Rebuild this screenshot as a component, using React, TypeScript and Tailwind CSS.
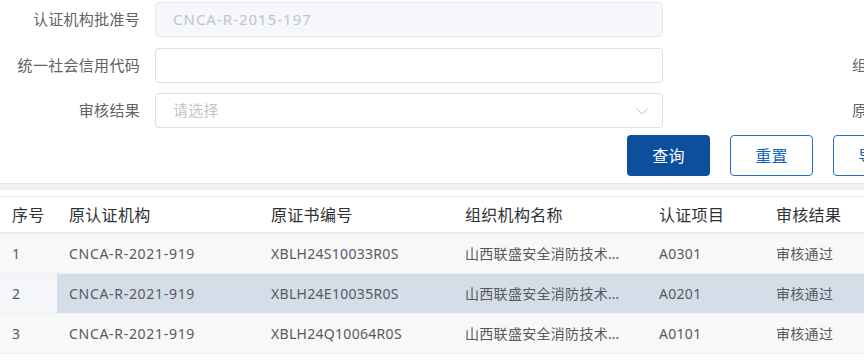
const ROWS = [
  { no: "1", org: "CNCA-R-2021-919", cert: "XBLH24S10033R0S", name: "山西联盛安全消防技术有限公司", item: "A0301", result: "审核通过" },
  { no: "2", org: "CNCA-R-2021-919", cert: "XBLH24E10035R0S", name: "山西联盛安全消防技术有限公司", item: "A0201", result: "审核通过" },
  { no: "3", org: "CNCA-R-2021-919", cert: "XBLH24Q10064R0S", name: "山西联盛安全消防技术有限公司", item: "A0101", result: "审核通过" },
];

const font = "font-['Noto_Sans','Noto_Sans_CJK_SC',sans-serif] tracking-[0.3px]";

function FormRow({ label, right, children }: { label: string; right?: string; children: React.ReactNode }) {
  return (
    <div className="flex items-center w-[864px] h-[35px] overflow-hidden">
      <label className="w-[155px] pr-[15px] text-right text-[15px] text-[#606266] shrink-0">{label}</label>
      {children}
      {right && <span className="ml-[189px] text-[15px] text-[#606266] whitespace-nowrap">{right}</span>}
    </div>
  );
}

export default function App() {
  return (
    <div className={`w-[864px] h-[361px] overflow-hidden bg-white ${font}`}>
      {/* Search form */}
      <div className="pt-[2px] flex flex-col gap-[10.5px]">
        <FormRow label="认证机构批准号">
          <div className="w-[508px] h-[35px] shrink-0 flex items-center px-[17px] rounded border border-[#e4e7ed] bg-[#f5f7fa] text-[15px] tracking-[1px] text-[#c0c4cc]">
            CNCA-R-2015-197
          </div>
        </FormRow>
        <FormRow label="统一社会信用代码" right="组织机构名称">
          <div className="w-[508px] h-[35px] shrink-0 rounded border border-[#dcdfe6] bg-white" />
        </FormRow>
        <FormRow label="审核结果" right="原证书编号">
          <div className="w-[508px] h-[35px] shrink-0 flex items-center justify-between pl-[17px] pr-[14px] rounded border border-[#dcdfe6] bg-white text-[15px] text-[#c0c4cc]">
            <span>请选择</span>
            <svg width="12" height="7" viewBox="0 0 12 7" fill="none" className="mt-[2px]">
              <polyline points="0.5,0.5 6,6 11.5,0.5" stroke="#c0c4cc" strokeWidth="1" />
            </svg>
          </div>
        </FormRow>
      </div>

      {/* Buttons */}
      <div className="mt-[7px] flex gap-[20px] pl-[627px] w-[864px] overflow-hidden">
        <button className="w-[83px] h-[41px] shrink-0 rounded bg-[#0b4f9d] text-white text-[16px]">查询</button>
        <button className="w-[83px] h-[41px] shrink-0 rounded border border-[#1f6fc4] bg-white text-[#1665b8] text-[16px]">重置</button>
        <button className="w-[83px] h-[41px] shrink-0 rounded border border-[#1f6fc4] bg-white text-[#1665b8] text-[16px]">导出</button>
      </div>

      {/* Divider band */}
      <div className="mt-[7px] h-[7px] border-t border-[#e6e6e6] bg-[#f0f1f3]" />

      {/* Table */}
      <div className="mt-[6px] w-[1000px] border-t border-[#e6ebf5]">
        <div className="flex h-[37px] items-center bg-white border-b-2 border-[#e9edf3] text-[16px] text-[#303133]">
          <div className="w-[57px] pl-[12px] shrink-0">序号</div>
          <div className="w-[202px] pl-[12px] shrink-0">原认证机构</div>
          <div className="w-[194px] pl-[12px] shrink-0">原证书编号</div>
          <div className="w-[194px] pl-[12px] shrink-0">组织机构名称</div>
          <div className="w-[117px] pl-[12px] shrink-0">认证项目</div>
          <div className="w-[236px] pl-[12px] shrink-0">审核结果</div>
        </div>
        {ROWS.map((r, i) => {
          const hover = i === 1;
          const cell = hover ? "bg-[#d5dee8]" : "bg-[#f8f8f9]";
          return (
            <div key={r.no} className="flex h-[40px] border-b border-[#eceef2] text-[14px] text-[#555a62]">
              <div className={`w-[57px] pl-[12px] shrink-0 flex items-center ${hover ? "bg-[#f4f6f9]" : "bg-[#f8f8f9]"}`}>{r.no}</div>
              <div className={`w-[202px] pl-[12px] shrink-0 flex items-center tracking-[0.7px] ${cell}`}>{r.org}</div>
              <div className={`w-[194px] pl-[12px] shrink-0 flex items-center ${cell}`}>{r.cert}</div>
              <div className={`w-[194px] pl-[12px] pr-[24px] shrink-0 flex items-center min-w-0 ${cell}`}>
                <span className="truncate min-w-0">{r.name}</span>
              </div>
              <div className={`w-[117px] pl-[12px] shrink-0 flex items-center ${cell}`}>{r.item}</div>
              <div className={`w-[236px] pl-[12px] shrink-0 flex items-center ${cell}`}>{r.result}</div>
            </div>
          );
        })}
      </div>
    </div>
  );
}
